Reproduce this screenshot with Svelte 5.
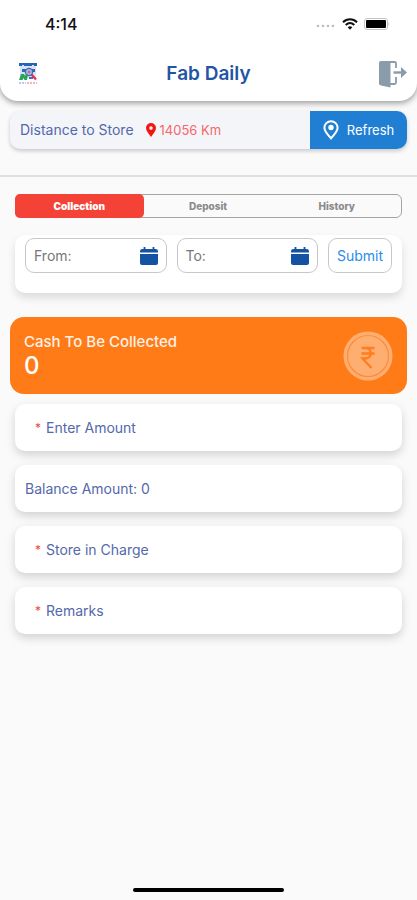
<script>
  // Fab Daily: cash collection screen.
  const tabs = ['Collection', 'Deposit', 'History'];
  let active = $state('Collection');
  let distance = $state(14056);
  let cash = $state(0);
  let balance = $state(0);
  let dates = $state({ from: '', to: '' });
  let form = $state({ amount: '', incharge: '', remarks: '' });
</script>

{#snippet dateField(id, text)}
  <div class="date">
    <label for={id}>{text}</label>
    <input {id} type="text" bind:value={dates[id]} />
    <button type="button" class="cal" aria-label="Open calendar">
      <svg width="18" height="18" viewBox="0 0 18 18" fill="#1453a3"><path d="M3.6 0h1.8v2h7.2V0h1.8v2h1.2Q18 2 18 4.200V5.600H0V4.200Q0 2 2.400 2h1.200z"/><path d="M0 7h18v9q0 2-2 2H2q-2 0-2-2z"/></svg>
    </button>
  </div>
{/snippet}

{#snippet textField(id, text)}
  <div class="card field">
    <label class="req" for={id}>*</label>
    <input {id} type="text" placeholder={text} aria-label={text} bind:value={form[id]} />
  </div>
{/snippet}

<div class="screen">
  <header>
    <div class="status">
      <span class="time">4:14</span>
      <div class="status-icons">
        <svg width="20" height="6" viewBox="0 0 20 6" fill="#bcbcbc"><circle cx="2" cy="5" r="1.300"/><circle cx="7" cy="5" r="1.300"/><circle cx="12" cy="5" r="1.300"/><circle cx="17" cy="5" r="1.300"/></svg>
        <svg width="16" height="12" viewBox="0 0 16 12" fill="none" stroke="#111" stroke-width="2"><path d="M1 4.200C5 .2 11 .2 15 4.200"/><path d="M3.700 7C6.300 4.500 9.700 4.500 12.300 7"/><path d="M8 11.700L5.700 9.300Q8 7.400 10.300 9.300z" fill="#111" stroke="none"/></svg>
        <svg width="26" height="12" viewBox="0 0 26 12"><rect x=".5" y=".5" width="23" height="11" rx="2.500" fill="#fff" stroke="#c4c4c4"/><rect x="2" y="2" width="20" height="8" rx="1" fill="#000"/><path d="M24.500 4q1.500 2 0 4z" fill="#aaa"/></svg>
      </div>
    </div>
    <div class="bar">
      <svg class="logo" width="20" height="22" viewBox="0 0 20 22">
        <rect x="2" y="1" width="16" height="14" fill="#d6e4f8"/>
        <path d="M1 0h18v3h-3V2h-2v1H6V2H4v1H1z" fill="#2463b5"/>
        <path d="M4 6h4v3H4zM13 6h4v3h-4z" fill="#3567b8"/>
        <circle cx="11" cy="9" r="3.600" fill="#9fb9e8" stroke="#4265ad" stroke-width="1.200"/>
        <circle cx="11" cy="9" r="1.300" fill="#d85b78"/>
        <path d="M13.500 11.500l4.500 5" stroke="#e02f49" stroke-width="2.200"/>
        <path d="M1 17l2-6h3l1 2 1-2h2l-1 6H6.500l-1-2-1 2z" fill="#29a354"/>
        <path d="M11 14h4v2h-4z" fill="#3f6fc0"/>
        <path d="M1 20h7" stroke="#a8b9e5" stroke-width="1.500" stroke-dasharray="2 1"/>
        <path d="M9 20h10" stroke="#f19aa8" stroke-width="1.500" stroke-dasharray="2 1"/>
      </svg>
      <h1>Fab Daily</h1>
      <button type="button" class="logout" aria-label="Log out">
        <svg width="28" height="28" viewBox="0 0 28 28"><path d="M2 1h9.500v26.500L2 25.500Q0 25 0 23.500V3q0-2 2-2z" fill="#8a9baa"/><path d="M11 2h4.500q1.500 0 1.500 1.500V8M17 17v5.500q0 1.500-1.500 1.500H11" fill="none" stroke="#8a9baa" stroke-width="1.800"/><path d="M14.500 12.500H23" stroke="#8a9baa" stroke-width="2.400"/><path d="M22 7l6 5.500-6 5.500z" fill="#8a9baa"/></svg>
      </button>
    </div>
  </header>

  <section class="distance">
    <span class="dist-label">Distance to Store</span>
    <svg width="10" height="14" viewBox="0 0 10 14" fill="#f5150f"><path fill-rule="evenodd" d="M5 0a5 5 0 0 1 5 5c0 3.200-3 6-5 9-2-3-5-5.800-5-9a5 5 0 0 1 5-5zm0 3.300a1.800 1.800 0 1 0 0 3.600 1.800 1.800 0 0 0 0-3.600z"/></svg>
    <span class="dist-value">{distance} Km</span>
    <button type="button" class="refresh">
      <svg width="16" height="20" viewBox="0 0 16 20"><path d="M8 1.200a6.600 6.600 0 0 1 6.600 6.600c0 4-4.100 7.400-6.600 10.600C5.500 15.200 1.400 11.800 1.400 7.800A6.600 6.600 0 0 1 8 1.200z" fill="none" stroke="#fff" stroke-width="2"/><circle cx="8" cy="7.500" r="2.700" fill="#fff"/></svg>
      Refresh
    </button>
  </section>

  <hr />

  <main>
    <div class="tabs" role="tablist">
      {#each tabs as tab}
        <button type="button" role="tab" class:active={active === tab} aria-selected={active === tab} onclick={() => (active = tab)}>{tab}</button>
      {/each}
    </div>

    <form class="filter" onsubmit={(e) => e.preventDefault()}>
      {@render dateField('from', 'From:')}
      {@render dateField('to', 'To:')}
      <button class="submit">Submit</button>
    </form>

    <section class="cash">
      <div>
        <h2>Cash To Be Collected</h2>
        <p>{cash}</p>
      </div>
      <svg width="50" height="50" viewBox="0 0 50 50" fill="none"><circle cx="25" cy="25" r="24.500" fill="#ffae72"/><circle cx="25" cy="25" r="20.500" stroke="#ff8b38" stroke-width="1.200"/><path d="M18.500 17h13M18.500 22.500h13M19 17h3.500c7 0 7 10.500 0 10.500H19.500l9 9.500" stroke="#ff7d1c" stroke-width="2.300"/></svg>
    </section>

    <div class="fields">
      {@render textField('amount', 'Enter Amount')}
      <div class="card">Balance Amount: {balance}</div>
      {@render textField('incharge', 'Store in Charge')}
      {@render textField('remarks', 'Remarks')}
    </div>
  </main>

  <div class="home"></div>
</div>

<style>
  :global(body) { margin: 0; background: #fafafa; }
  .screen { min-height: 100vh; box-sizing: border-box; display: flex; flex-direction: column; padding-bottom: 8px; font-family: Inter, "Liberation Sans", sans-serif; font-size: 14px; line-height: 18px; color: #5468ab; overflow: hidden; }
  button, input { font: inherit; color: inherit; background: none; border: 0; padding: 0; margin: 0; }
  button { cursor: pointer; }
  svg { display: block; flex: none; }

  /* HEADER */
  header { background: #fff; border-radius: 0 0 18px 18px; box-shadow: 0 2px 6px rgba(0, 0, 0, .4); }
  .status { height: 48px; display: flex; align-items: center; justify-content: space-between; padding: 0 27px 0 45px; }
  .time { font-size: 16px; font-weight: 500; color: #111; }
  .status-icons { display: flex; align-items: center; gap: 6px; }
  .bar { height: 53px; display: flex; align-items: center; justify-content: space-between; padding: 0 10px 2px 18px; box-sizing: border-box; }
  h1 { margin: 0; font-size: 19px; font-weight: 600; line-height: 24px; color: #1f55a4; }

  /* DISTANCE */
  .distance { display: flex; align-items: center; height: 38px; margin: 10px 10px 0; padding-left: 10px; background: #f3f5f9; border-radius: 10px; box-shadow: 0 2px 4px rgba(0, 0, 0, .2); overflow: hidden; }
  .dist-label { margin-right: 12px; }
  .dist-value { margin-left: 4px; font-size: 13px; color: #f8666a; }
  .refresh { margin-left: auto; height: 100%; width: 97px; background: #217fd3; color: #fff; display: flex; align-items: center; justify-content: center; gap: 8px; font-size: 13px; }
  hr { width: 100%; height: 2px; margin: 26px 0 0; border: 0; background: #e0e0e0; }

  main { padding: 17px 10px 0; }

  /* TABS */
  .tabs { display: flex; height: 24px; box-sizing: border-box; margin: 0 5px; border: 1px solid #a5a5a5; border-radius: 6px; }
  .tabs button { flex: 1; font-size: 10px; font-weight: 800; color: #8b8b8b; border-radius: 5px; }
  .tabs .active { background: #f44336; color: #fff; margin: -1px 0 -1px -1px; font-weight: 900; }

  /* DATE FILTER */
  .filter { display: flex; gap: 10px; margin: 17px 5px 0; padding: 3px 10px 20px; background: #fff; border-radius: 10px; box-shadow: 0 5px 8px rgba(0, 0, 0, .12); }
  .date { flex: 1; min-width: 0; height: 35px; box-sizing: border-box; display: flex; align-items: center; padding: 0 8px; border: 1px solid #c8c8c8; border-radius: 9px; color: #777; }
  .date input { flex: 1; min-width: 0; outline: none; }
  .submit { width: 64px; height: 35px; border: 1px solid #c8c8c8; border-radius: 9px; color: #2a8cea; }

  /* CASH */
  .cash { display: flex; align-items: center; justify-content: space-between; height: 77px; box-sizing: border-box; margin-top: 24px; padding: 0 14px; background: #ff7b17; border-radius: 14px; color: #fff1e4; }
  .cash h2 { margin: 0; font-size: 15px; line-height: 20px; font-weight: 500; }
  .cash p { margin: 0; font-size: 24px; line-height: 28px; font-weight: 500; color: #fff; }

  /* FIELDS */
  .fields { display: flex; flex-direction: column; gap: 14px; margin: 10px 5px 0; }
  .card { display: flex; align-items: center; height: 47px; padding: 0 10px; background: #fff; border-radius: 10px; box-shadow: 0 4px 10px rgba(0, 0, 0, .16); }
  .field { padding-left: 20px; }
  .req { width: 11px; font-size: 12px; color: #f0453a; }
  .field input { flex: 1; min-width: 0; outline: none; }
  .field input::placeholder { color: #5468ab; opacity: 1; }

  .home { width: 36%; height: 4px; margin: auto auto 0; border-radius: 2px; background: #000; }
</style>
